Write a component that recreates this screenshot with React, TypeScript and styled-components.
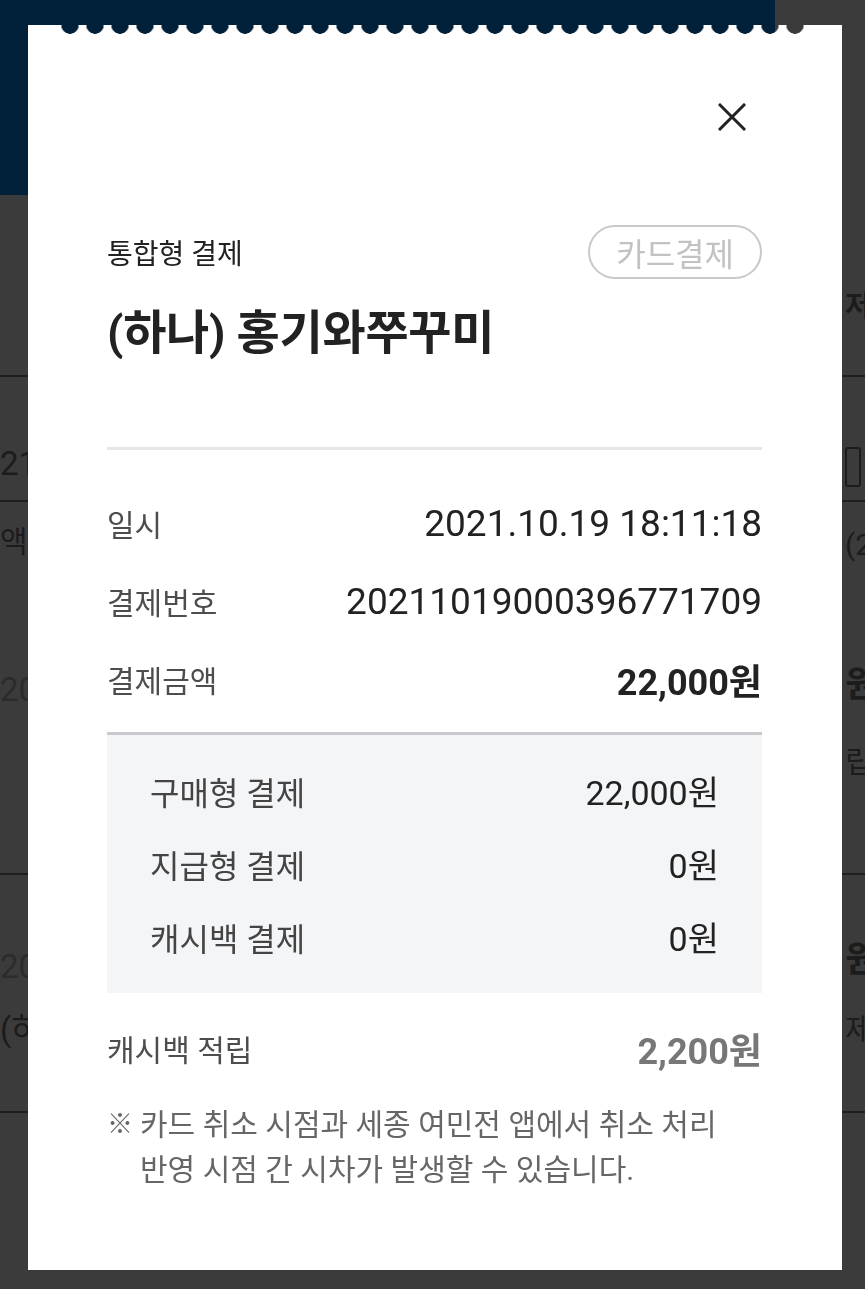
import React from "react";
import styled, { createGlobalStyle } from "styled-components";

const GlobalStyle = createGlobalStyle`
  html, body {
    margin: 0;
    padding: 0;
  }

  body {
    background: #3b3b3b;
    font-family: Roboto, "Noto Sans CJK KR", sans-serif;
  }

  * {
    box-sizing: border-box;
  }
`;

const breakdown = [
    { label: "구매형 결제", value: "22,000원" },
    { label: "지급형 결제", value: "0원" },
    { label: "캐시백 결제", value: "0원" },
];

function CloseIcon() {
    return (
        <svg width="28" height="28" viewBox="0 0 28 28" fill="none">
            <path
                d="M2 2 L26 26 M26 2 L2 26"
                stroke="#222"
                strokeWidth="3"
                strokeLinecap="square"
            />
        </svg>
    );
}

function Backdrop() {
    return (
        <>
            <Header />
            <Tabs>
                <Peek $side="left" />
                <Peek $side="right">
                    <PeekText $size={28} $bold>
                        저장
                    </PeekText>
                </Peek>
            </Tabs>
            <Item $height={125}>
                <Peek $side="left" $pad={67}>
                    <PeekText $size={33}>21.10.21</PeekText>
                </Peek>
                <Peek $side="right" $pad={70}>
                    <CheckBox />
                </Peek>
            </Item>
            <Item $height={373}>
                <Peek $side="left" $pad={20}>
                    <PeekText $size={30}>액합계</PeekText>
                    <PeekText $size={33} $top={108} $muted>
                        2021
                    </PeekText>
                </Peek>
                <Peek $side="right" $pad={23}>
                    <PeekText $size={30}>(2</PeekText>
                    <PeekText $size={36} $top={100} $bold>
                        원
                    </PeekText>
                    <PeekText $size={30} $top={37}>
                        립
                    </PeekText>
                </Peek>
            </Item>
            <Item $height={238}>
                <Peek $side="left" $pad={72}>
                    <PeekText $size={33} $muted>
                        2021
                    </PeekText>
                    <PeekText $size={33} $top={23}>
                        (하나)
                    </PeekText>
                </Peek>
                <Peek $side="right" $pad={65}>
                    <PeekText $size={36} $bold>
                        원
                    </PeekText>
                    <PeekText $size={30} $top={30}>
                        제
                    </PeekText>
                </Peek>
            </Item>
        </>
    );
}

function App() {
    return (
        <Page>
            <GlobalStyle />
            <Backdrop />
            <Overlay>
                <Sheet>
                    <CloseButton aria-label="닫기">
                        <CloseIcon />
                    </CloseButton>
                    <TopRow>
                        <Subtitle>통합형 결제</Subtitle>
                        <Badge>카드결제</Badge>
                    </TopRow>
                    <Title>(하나) 홍기와쭈꾸미</Title>
                    <Divider />
                    <InfoList>
                        <Row>
                            <Label>일시</Label>
                            <Value>2021.10.19 18:11:18</Value>
                        </Row>
                        <Row>
                            <Label>결제번호</Label>
                            <Value>20211019000396771709</Value>
                        </Row>
                        <Row>
                            <Label>결제금액</Label>
                            <Value $bold>22,000원</Value>
                        </Row>
                    </InfoList>
                    <Breakdown>
                        {breakdown.map((item) => (
                            <SubRow key={item.label}>
                                <SubLabel>{item.label}</SubLabel>
                                <SubValue>{item.value}</SubValue>
                            </SubRow>
                        ))}
                    </Breakdown>
                    <Row $top={16}>
                        <Label>캐시백 적립</Label>
                        <Value $bold $muted>
                            2,200원
                        </Value>
                    </Row>
                    <Notice>
                        <NoticeMark>※</NoticeMark>
                        <NoticeText>
                            카드 취소 시점과 세종 여민전 앱에서 취소 처리
                            <br />
                            반영 시점 간 시차가 발생할 수 있습니다.
                        </NoticeText>
                    </Notice>
                </Sheet>
            </Overlay>
        </Page>
    );
}

const Page = styled.div`
    position: relative;
    width: 865px;
    height: 1289px;
    overflow: hidden;
    background: #3b3b3b;
    color: #1c1c1c;
`;

const Header = styled.header`
    width: 775px;
    height: 195px;
    background: #01203a;
`;

const Tabs = styled.div`
    height: 182px;
    display: flex;
    justify-content: space-between;
    align-items: flex-end;
    padding-bottom: 48px;
    border-bottom: 2px solid #1f1f1f;
`;

const Item = styled.div<{ $height: number }>`
    height: ${(p) => p.$height}px;
    display: flex;
    justify-content: space-between;
    align-items: flex-start;
    border-bottom: 2px solid #1f1f1f;
`;

const Peek = styled.div<{ $side: "left" | "right"; $pad?: number }>`
    width: ${(p) => (p.$side === "left" ? 28 : 20)}px;
    padding-top: ${(p) => p.$pad ?? 0}px;
    display: flex;
    flex-direction: column;
    white-space: nowrap;
    overflow: ${(p) => (p.$side === "left" ? "hidden" : "visible")};
`;

const PeekText = styled.span<{
    $size: number;
    $top?: number;
    $bold?: boolean;
    $muted?: boolean;
}>`
    margin-top: ${(p) => p.$top ?? 0}px;
    font-size: ${(p) => p.$size}px;
    line-height: 40px;
    font-weight: ${(p) => (p.$bold ? 700 : 400)};
    color: ${(p) => (p.$muted ? "#2b2b2b" : "#1c1c1c")};
`;

const CheckBox = styled.span`
    display: block;
    width: 16px;
    height: 40px;
    border: 2px solid #1c1c1c;
    border-radius: 3px;
`;

const Overlay = styled.div`
    position: absolute;
    inset: 0;
    display: flex;
    padding: 25px 23px 19px 28px;
`;

const scallop = `
    radial-gradient(circle at 12.5px 0, transparent 8.5px, #000 9px) 29.5px 0 / 25px 10px repeat-x,
    linear-gradient(#000, #000) 0 0 / 30px 10px no-repeat,
    linear-gradient(#000, #000) right 0 top 0 / 34px 10px no-repeat,
    linear-gradient(#000, #000) 0 10px / 100% calc(100% - 10px) no-repeat
`;

const Sheet = styled.section`
    flex: 1;
    display: flex;
    flex-direction: column;
    padding: 72px 80px 0 79px;
    background: #fff;
    -webkit-mask: ${scallop};
    mask: ${scallop};
`;

const CloseButton = styled.button`
    align-self: flex-end;
    width: 40px;
    height: 40px;
    margin-right: 10px;
    padding: 0;
    border: none;
    background: none;
    display: grid;
    place-items: center;
    cursor: pointer;
`;

const TopRow = styled.div`
    margin-top: 88px;
    display: flex;
    justify-content: space-between;
    align-items: center;
`;

const Subtitle = styled.span`
    font-size: 28px;
    color: #222;
`;

const Badge = styled.span`
    height: 54px;
    padding: 0 26px;
    display: flex;
    align-items: center;
    border: 2px solid #c9c9c9;
    border-radius: 27px;
    font-size: 32px;
    color: #c2c2c2;
`;

const Title = styled.h1`
    margin: 25px 0 0;
    font-size: 47px;
    line-height: 57px;
    font-weight: 700;
    color: #222;
    letter-spacing: -0.3px;
`;

const Divider = styled.hr`
    margin: 86px 0 0;
    height: 3px;
    border: none;
    background: #e6e6e6;
`;

const InfoList = styled.div`
    margin-top: 34px;
    display: flex;
    flex-direction: column;
`;

const Row = styled.div<{ $top?: number }>`
    margin-top: ${(p) => p.$top ?? 0}px;
    height: 78px;
    display: flex;
    justify-content: space-between;
    align-items: center;
`;

const Label = styled.span`
    font-size: 30px;
    color: #4d4d4d;
`;

const Value = styled.span<{ $bold?: boolean; $muted?: boolean }>`
    font-size: ${(p) => (p.$bold ? 36 : 37)}px;
    font-weight: ${(p) => (p.$bold ? 700 : 400)};
    color: ${(p) => (p.$muted ? "#777" : "#222")};
`;

const Breakdown = styled.div`
    margin-top: 14px;
    padding: 19px 43px 20px;
    display: flex;
    flex-direction: column;
    background: #f4f5f7;
    border-top: 3px solid #c8c9cc;
`;

const SubRow = styled.div`
    height: 73px;
    display: flex;
    justify-content: space-between;
    align-items: center;
`;

const SubLabel = styled.span`
    font-size: 32px;
    color: #444;
`;

const SubValue = styled.span`
    font-size: 34px;
    color: #222;
`;

const Notice = styled.div`
    margin-top: 15px;
    display: flex;
    font-size: 30px;
    line-height: 45px;
    color: #666;
`;

const NoticeMark = styled.span`
    flex: 0 0 33px;
    font-size: 26px;
`;

const NoticeText = styled.p`
    margin: 0;
`;

export default App;
